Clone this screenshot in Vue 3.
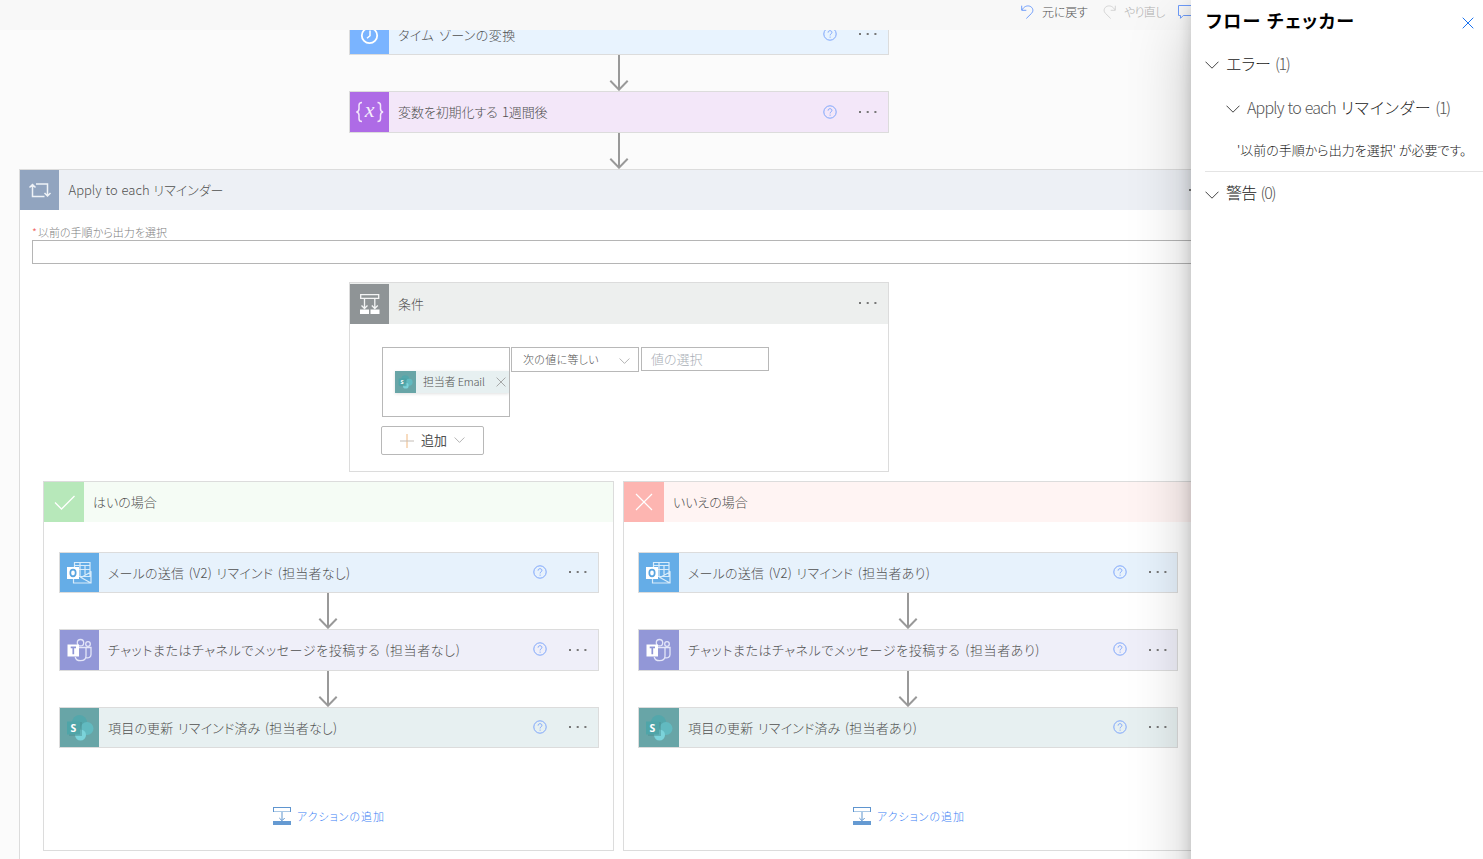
<template>
  <div class="designer">
    <svg class="sprite" width="40" height="40">
      <symbol id="icon-help" viewBox="0 0 14 14">
        <circle cx="7" cy="7" r="6.2" fill="none" stroke="#7ea6fb" stroke-width="1" />
        <path d="M5.1 5.6c0-1.2.8-1.9 1.9-1.9s1.9.7 1.9 1.7c0 1.5-1.8 1.5-1.8 3M7.1 9.6v1.1" fill="none" stroke="#7ea6fb" stroke-width="1" />
      </symbol>
      <symbol id="icon-dots" viewBox="0 0 20 4">
        <path d="M1 1h2v2H1zM8.7 1h2v2h-2zM16.4 1h2v2h-2z" fill="#777" />
      </symbol>
      <symbol id="icon-arrow" viewBox="0 0 20 36">
        <path d="M10 0v34M1.3 25.8l8.7 8.9 8.7-8.9" fill="none" stroke="#999" stroke-width="2" />
      </symbol>
      <symbol id="icon-chevron" viewBox="0 0 14 8">
        <path d="M.5.7L7 7.2 13.5.7" fill="none" stroke="currentColor" stroke-width="1" />
      </symbol>
      <symbol id="icon-cross" viewBox="0 0 12 12">
        <path d="M.7.7l10.6 10.6M11.3.7L.7 11.3" fill="none" stroke="currentColor" stroke-width="1" />
      </symbol>
      <symbol id="icon-insert" viewBox="0 0 18 18">
        <path d="M0 0h18v5H0z" fill="#a9c8e6" />
        <path d="M0 0h18v1H0zM0 0h1v5H0zM17 0h1v5h-1z" fill="#5f95cf" />
        <path d="M1 1h16v3H1z" fill="#fff" />
        <path d="M9 5v8.5M6.3 11l2.7 2.7 2.7-2.7" fill="none" stroke="#5f95cf" stroke-width="1" />
        <path d="M0 14h18v4H0z" fill="#659ad2" />
      </symbol>

      <symbol id="icon-clock" viewBox="0 0 40 40">
        <circle cx="19.5" cy="21.5" r="7.7" fill="none" stroke="#fff" stroke-width="1.8" />
        <path d="M20 16.5v5.2l-3 2.6" fill="none" stroke="#fff" stroke-width="1.5" />
      </symbol>
      <symbol id="icon-variable" viewBox="0 0 40 40">
        <path d="M12 10.5c-2.3 0-3 .7-3 2.8v3.4c0 2-.7 3-2.6 3.3 1.9.3 2.6 1.3 2.6 3.3v3.4c0 2.1.7 2.8 3 2.8M27.5 10.5c2.3 0 3 .7 3 2.8v3.4c0 2 .7 3 2.6 3.3-1.9.3-2.6 1.3-2.6 3.3v3.4c0 2.1-.7 2.8-3 2.8" fill="none" stroke="#f3e8fb" stroke-width="1.5" />
        <text x="19.7" y="25" text-anchor="middle" font-family="Liberation Serif, serif" font-style="italic" font-size="22" fill="#f6eefc">x</text>
      </symbol>
      <symbol id="icon-loop" viewBox="0 0 40 40">
        <path d="M24.5 26.5h-12V15M9.5 17.5l3-3 3 3M16 14h11.5v11.5M24.5 23l3 3 3-3" fill="none" stroke="#eef2f7" stroke-width="1.5" />
      </symbol>
      <symbol id="icon-condition" viewBox="0 0 40 40">
        <path d="M10.7 10.7h18v3.6h-18zM14.5 14.5v10M24.8 14.5v10M11.5 21.5l3 3 3-3M21.8 21.5l3 3 3-3" fill="none" stroke="#f4f5f5" stroke-width="1.3" />
        <path d="M10 25.5h9V30h-9zM20.5 25.5h9V30h-9z" fill="#fff" />
      </symbol>
      <symbol id="icon-yes" viewBox="0 0 40 40">
        <path d="M11 20.5l6.5 6.5 13-13" fill="none" stroke="#fff" stroke-width="1.3" />
      </symbol>
      <symbol id="icon-no" viewBox="0 0 40 40">
        <path d="M12 12l16 16M28 12L12 28" fill="none" stroke="#fff" stroke-width="1.2" />
      </symbol>
      <symbol id="icon-outlook" viewBox="0 0 40 40">
        <path d="M14.5 9.5H30v14H14.5zM14.5 12.5H30M14.5 16.5H30M20 9.5v14M25 12.5v9M13.5 19.5V30H31V19l-10 5.5L31 30" fill="none" stroke="#d9ecfa" stroke-width="1.2" />
        <path d="M7 14h12v12H7z" fill="#fff" />
        <ellipse cx="13" cy="20" rx="2.7" ry="3.3" fill="none" stroke="#5aa5e0" stroke-width="1.7" />
      </symbol>
      <symbol id="icon-teams" viewBox="0 0 40 40">
        <g fill="none" stroke="#e4e6f8" stroke-width="1.3">
          <circle cx="20.5" cy="12.7" r="3.2" />
          <circle cx="28" cy="14" r="2.3" />
          <path d="M19 17.5h7V26c0 3-2.5 4.7-5.5 4.7-2.8 0-4.8-1.6-5.3-3.7M26 17.5h5v7c0 2.5-2 3.8-4.8 3.3" />
        </g>
        <path d="M7.5 14.5H19v12H7.5z" fill="#fff" />
        <path d="M10.7 17.3H16M13.3 17.3v7" fill="none" stroke="#8f95d6" stroke-width="1.7" />
      </symbol>
      <symbol id="icon-sharepoint" viewBox="0 0 40 40">
        <circle cx="19.5" cy="14.5" r="7.5" fill="#53a7ab" />
        <circle cx="27" cy="20.5" r="6.5" fill="#62bac0" />
        <circle cx="20.5" cy="27" r="5.5" fill="#7bd3da" />
        <path d="M9 14h13v14H9z" fill="#4b8f92" opacity=".5" />
        <path d="M7 13.5h13v13H7z" fill="#4fa5a8" />
        <text x="13.5" y="24" text-anchor="middle" font-family="Noto Sans, sans-serif" font-weight="700" font-size="10.5" fill="#fff">S</text>
      </symbol>
    </svg>

    <header class="toolbar">
      <button class="tool undo">
        <svg width="13" height="14" viewBox="0 0 13 14">
          <path d="M.7.7v4.6h4.6M.9 5C3 1.5 6 .3 8.7 1.2c3.3 1.1 4.1 4.7 2 7l-5.4 5.3" fill="none" stroke="#6f9dfb" stroke-width="1" />
        </svg>
        <span>元に戻す</span>
      </button>
      <button class="tool redo">
        <svg width="13" height="14" viewBox="0 0 13 14">
          <path d="M12.3.7v4.6H7.7M12.1 5C10 1.5 7 .3 4.3 1.2 1 2.3.2 5.9 2.3 8.2l5.4 5.3" fill="none" stroke="#d4d4d4" stroke-width="1" />
        </svg>
        <span>やり直し</span>
      </button>
      <button class="tool comment">
        <svg width="16" height="14" viewBox="0 0 16 14">
          <path d="M16 .5H.5v10h2v2.8l2.8-2.8H16" fill="none" stroke="#6f9dfb" stroke-width="1" />
        </svg>
      </button>
    </header>

    <main class="canvas">
      <template v-for="step in topSteps" :key="step.title">
        <div class="step" :class="step.icon">
          <div class="step-icon"><svg><use :href="'#icon-' + step.icon" /></svg></div>
          <div class="step-title" :style="{ letterSpacing: step.spacing + 'px' }">{{ step.title }}</div>
          <svg class="help"><use href="#icon-help" /></svg>
          <svg class="dots"><use href="#icon-dots" /></svg>
        </div>
        <svg class="arrow"><use href="#icon-arrow" /></svg>
      </template>

      <section class="scope">
        <div class="scope-header">
          <div class="step-icon"><svg><use href="#icon-loop" /></svg></div>
          <div class="step-title">Apply to each リマインダー</div>
          <svg class="dots"><use href="#icon-dots" /></svg>
        </div>
        <div class="scope-input">
          <label><i>*</i>以前の手順から出力を選択</label>
          <div class="field"></div>
        </div>

        <div class="condition">
          <div class="condition-header">
            <div class="step-icon"><svg><use href="#icon-condition" /></svg></div>
            <div class="step-title">条件</div>
            <svg class="dots"><use href="#icon-dots" /></svg>
          </div>
          <div class="condition-row">
            <div class="operand">
              <div class="token">
                <div class="token-icon"><svg><use href="#icon-sharepoint" /></svg></div>
                <span>担当者 Email</span>
                <svg class="token-remove"><use href="#icon-cross" /></svg>
              </div>
            </div>
            <div class="operator">
              <span>次の値に等しい</span>
              <svg><use href="#icon-chevron" /></svg>
            </div>
            <div class="value">値の選択</div>
          </div>
          <button class="add-button">
            <svg class="plus" viewBox="0 0 14 14"><path d="M7 0v14" stroke="#f0b880" /><path d="M0 7h14" stroke="#c4bdb6" /></svg>
            <span>追加</span>
            <svg class="add-chevron"><use href="#icon-chevron" /></svg>
          </button>
        </div>

        <div class="branches">
          <div v-for="branch in branches" :key="branch.type" class="branch" :class="branch.type">
            <div class="branch-header">
              <div class="branch-icon"><svg><use :href="'#icon-' + branch.type" /></svg></div>
              <div class="step-title">{{ branch.title }}</div>
            </div>
            <div class="branch-steps">
              <template v-for="(step, index) in branch.steps" :key="step.title">
                <svg v-if="index > 0" class="arrow"><use href="#icon-arrow" /></svg>
                <div class="step" :class="step.icon">
                  <div class="step-icon"><svg><use :href="'#icon-' + step.icon" /></svg></div>
                  <div class="step-title" :style="{ letterSpacing: step.spacing + 'px' }">{{ step.title }}</div>
                  <svg class="help"><use href="#icon-help" /></svg>
                  <svg class="dots"><use href="#icon-dots" /></svg>
                </div>
              </template>
            </div>
            <a class="add-action">
              <svg><use href="#icon-insert" /></svg>
              <span>アクションの追加</span>
            </a>
          </div>
        </div>
      </section>
    </main>

    <aside class="checker">
      <div class="checker-head">
        <h2>フロー チェッカー</h2>
        <svg><use href="#icon-cross" /></svg>
      </div>
      <div class="group errors">
        <svg><use href="#icon-chevron" /></svg>
        <span class="kana">エラー</span>
        <span class="count">(1)</span>
      </div>
      <div class="group nested">
        <svg><use href="#icon-chevron" /></svg>
        <span class="latin">Apply to each</span>
        <span class="kana">リマインダー</span>
        <span class="count">(1)</span>
      </div>
      <p class="message">'以前の手順から出力を選択' が必要です。</p>
      <div class="group warnings">
        <svg><use href="#icon-chevron" /></svg>
        <span class="kana">警告</span>
        <span class="count">(0)</span>
      </div>
    </aside>
  </div>
</template>

<script setup>
// spacing: letter-spacing of the title in px
const topSteps = [
  { icon: 'clock', title: 'タイム ゾーンの変換', spacing: 0.45 },
  { icon: 'variable', title: '変数を初期化する 1週間後', spacing: -0.1 }
]

const branches = [
  {
    type: 'yes',
    title: 'はいの場合',
    steps: [
      { icon: 'outlook', title: 'メールの送信 (V2) リマインド (担当者なし)', spacing: 0.22 },
      { icon: 'teams', title: 'チャットまたはチャネルでメッセージを投稿する (担当者なし)', spacing: 0.58 },
      { icon: 'sharepoint', title: '項目の更新 リマインド済み (担当者なし)', spacing: 0.18 }
    ]
  },
  {
    type: 'no',
    title: 'いいえの場合',
    steps: [
      { icon: 'outlook', title: 'メールの送信 (V2) リマインド (担当者あり)', spacing: 0.22 },
      { icon: 'teams', title: 'チャットまたはチャネルでメッセージを投稿する (担当者あり)', spacing: 0.58 },
      { icon: 'sharepoint', title: '項目の更新 リマインド済み (担当者あり)', spacing: 0.18 }
    ]
  }
]
</script>

<style>
body {
  margin: 0;
  overflow: hidden;
}
</style>

<style scoped>
.designer {
  position: relative;
  width: 1483px;
  height: 859px;
  overflow: hidden;
  background: #fbfbfb;
  font-family: "Noto Sans CJK JP", "Noto Sans", sans-serif;
  font-feature-settings: "palt";
  font-weight: 300;
  font-size: 13px;
  color: #505050;
}

.designer * {
  box-sizing: border-box;
}

.sprite {
  position: absolute;
  overflow: visible;
}

svg {
  display: block;
  flex: none;
}

button {
  font: inherit;
  color: inherit;
  padding: 0;
  border: 0;
  background: none;
}

/* toolbar */
.toolbar {
  position: relative;
  z-index: 1;
  display: flex;
  height: 30px;
  padding-left: 1021px;
  background: #f8f8f8;
}

.tool {
  display: flex;
  height: 24px;
  align-items: center;
  white-space: nowrap;
  font-size: 12px;
}

.tool span {
  padding-bottom: 2px;
}

.undo {
  gap: 8px;
  width: 82px;
  letter-spacing: -0.2px;
}

.redo {
  gap: 8px;
  width: 75px;
  letter-spacing: -0.7px;
  color: #b0b0b0;
}

/* canvas */
.canvas {
  display: flex;
  flex-direction: column;
  margin-top: -17px;
}

.step {
  display: flex;
  align-items: center;
  flex: none;
  width: 540px;
  height: 42px;
  border: 1px solid #dcdcdc;
}

.canvas > .step {
  margin-left: 349px;
}

.canvas > .arrow {
  margin-left: 609px;
}

.clock .step-title {
  padding-top: 2px;
}

.step-icon {
  flex: none;
  width: 39px;
  height: 100%;
  overflow: hidden;
}

.step-icon svg,
.branch-icon svg {
  width: 40px;
  height: 40px;
}

.step-title {
  flex: 1;
  padding-left: 9px;
  white-space: nowrap;
  line-height: 20px;
  word-spacing: 1.5px;
}

.help {
  width: 14px;
  height: 14px;
  margin-right: 21.5px;
  margin-bottom: 1px;
}

.dots {
  width: 20px;
  height: 4px;
  margin-right: 10px;
}

.arrow {
  width: 20px;
  height: 36px;
}

.clock {
  background: #e8f3fe;
}

.clock .step-icon {
  background: #7ab4ff;
}

.variable {
  background: #f3e7f9;
}

.variable .step-icon {
  background: #ae6be6;
}

.outlook {
  background: #e7f2fc;
}

.outlook .step-icon {
  background: #65ade7;
}

.teams {
  background: #efeff9;
}

.teams .step-icon {
  background: #9297d7;
}

.sharepoint {
  background: #e7f0f1;
}

.sharepoint .step-icon {
  background: #68a5a7;
}

/* apply to each */
.scope {
  width: 1200px;
  height: 720px;
  margin-left: 19px;
  border: 1px solid #dcdcdc;
  background: #fff;
}

.scope-header {
  display: flex;
  align-items: center;
  height: 40px;
  background: #edf0f5;
}

.scope-header .step-title {
  padding-left: 9.5px;
  word-spacing: 1px;
}

.scope-header .step-icon {
  background: #91a4bf;
}

.scope-input {
  padding: 14px 12px 0;
}

.scope-input label {
  display: block;
  height: 16px;
  line-height: 16px;
  font-size: 11px;
  color: #808080;
  white-space: nowrap;
}

.scope-input i {
  display: inline-block;
  width: 6px;
  font-style: normal;
  color: #f0605c;
}

.field {
  height: 24px;
  border: 1px solid #b5b5b5;
}

/* condition card */
.condition {
  width: 540px;
  height: 190px;
  margin: 18px 0 0 329px;
  border: 1px solid #dcdcdc;
}

.condition-header {
  display: flex;
  align-items: center;
  height: 41px;
  background: #edefee;
}

.condition-header .step-icon {
  height: 40px;
  align-self: flex-end;
  background: #8f9496;
}

.condition-header .dots {
  margin-bottom: 1px;
}

.condition-row {
  display: flex;
  align-items: flex-start;
  padding: 23px 0 0 32px;
}

.operand,
.operator,
.value {
  width: 128px;
  border: 1px solid #b8b8b8;
}

.operand {
  height: 70px;
  padding: 23px 0 0 12px;
  overflow: hidden;
}

.token {
  display: flex;
  align-items: center;
  height: 22px;
  font-size: 11px;
  white-space: nowrap;
  background: #e7f0f1;
  box-shadow: 0 1px 3px rgba(0, 0, 0, 0.12);
}

.token span {
  padding-bottom: 2px;
  letter-spacing: -0.2px;
}

.token-icon {
  width: 21px;
  height: 22px;
  margin-right: 7px;
  background: #68a5a7;
}

.token-icon svg {
  width: 21px;
  height: 22px;
}

.token-remove {
  width: 10px;
  height: 10px;
  margin-left: auto;
  margin-right: 3.5px;
  color: #999;
}

.operator {
  display: flex;
  align-items: center;
  justify-content: space-between;
  height: 25px;
  margin: 0 2px 0 1px;
  padding: 0 8px 0 11px;
  font-size: 11px;
  letter-spacing: 0.3px;
  white-space: nowrap;
}

.operator span {
  padding-bottom: 2px;
}

.operator svg {
  width: 11px;
  height: 6px;
  margin-top: 3px;
  color: #999;
}

.value {
  height: 24px;
  padding-left: 9px;
  line-height: 22px;
  color: #a8aeb5;
}

.add-button {
  display: flex;
  align-items: center;
  width: 103px;
  height: 29px;
  margin: 9px 0 0 31px;
  padding-left: 18px;
  border: 1px solid #b8b8b8;
  border-radius: 2px;
  font-weight: 400;
}

.add-button span {
  padding-bottom: 2px;
}

.plus {
  width: 14px;
  height: 14px;
  margin-right: 7px;
}

.add-chevron {
  width: 11px;
  height: 6px;
  margin: 0 0 2px 7px;
  color: #999;
}

/* yes / no branches */
.branches {
  display: flex;
  gap: 9px;
  margin: 9px 0 0 23px;
}

.branch {
  flex: none;
  width: 571px;
  height: 370px;
  border: 1px solid #dcdcdc;
}

.branch-header {
  display: flex;
  align-items: center;
  height: 40px;
}

.branch-icon {
  width: 40px;
  height: 40px;
}

.yes .branch-header {
  background: #f5fcf5;
}

.yes .branch-icon {
  background: #b7e8ba;
}

.no .branch-header {
  background: #fff4f3;
}

.no .branch-icon {
  background: #fdb5b1;
}

.branch-steps {
  padding: 30px 0 0 15px;
}

.no .branch-steps {
  padding-left: 14px;
}

.branch-steps .step {
  height: 41px;
}

.branch-steps .teams {
  height: 42px;
}

.branch-steps .help {
  margin-bottom: 2px;
}

.branch-steps .dots {
  margin-bottom: 1px;
}

.no .dots {
  margin-right: 9px;
}

.no .step .step-icon {
  width: 40px;
}

.branch-steps .arrow {
  margin-left: 259px;
}

.no .branch-steps .arrow {
  margin-left: 260px;
}

.add-action {
  display: flex;
  align-items: center;
  gap: 6px;
  margin: 59px 0 0 229px;
  font-size: 11px;
  line-height: 18px;
  letter-spacing: 0.95px;
  color: #3a80f5;
  white-space: nowrap;
}

.add-action svg {
  width: 18px;
  height: 18px;
}

/* flow checker panel */
.checker {
  position: absolute;
  z-index: 2;
  top: 0;
  right: 0;
  width: 292px;
  height: 960px;
  background: #fff;
  box-shadow: 0 26px 58px rgba(0, 0, 0, 0.22), 0 5px 14px rgba(0, 0, 0, 0.18);
  color: #222;
  white-space: nowrap;
}

.checker-head {
  display: flex;
  align-items: center;
  justify-content: space-between;
  height: 42px;
  padding: 0 9px 0 15px;
}

.checker-head h2 {
  margin: 0;
  padding-bottom: 2px;
  font-size: 18px;
  font-weight: 700;
  letter-spacing: 1.3px;
  color: #000;
}

.checker-head svg {
  width: 12px;
  height: 12px;
  margin-top: 4px;
  color: #1a73f0;
}

.group {
  display: flex;
  align-items: center;
  height: 44px;
  padding-left: 14px;
  font-size: 16px;
}

.group span {
  padding-bottom: 2px;
}

.group svg {
  width: 14px;
  height: 8px;
  margin-top: 1px;
  margin-right: 7px;
  color: #444;
}

.group .count {
  margin-left: 4px;
  letter-spacing: -1.4px;
  color: #555;
}

.latin {
  margin-right: 5px;
  letter-spacing: -0.8px;
  word-spacing: 1px;
  color: #555;
}

.nested {
  padding-left: 35px;
}

.nested .kana {
  letter-spacing: 0.7px;
}

.warnings span {
  padding-bottom: 4px;
}

.warnings .kana {
  letter-spacing: -0.7px;
}

.message {
  height: 42px;
  margin: 0 0 0 14px;
  padding-left: 32px;
  border-bottom: 1px solid #e4e4e4;
  line-height: 40px;
  font-size: 13px;
}
</style>
